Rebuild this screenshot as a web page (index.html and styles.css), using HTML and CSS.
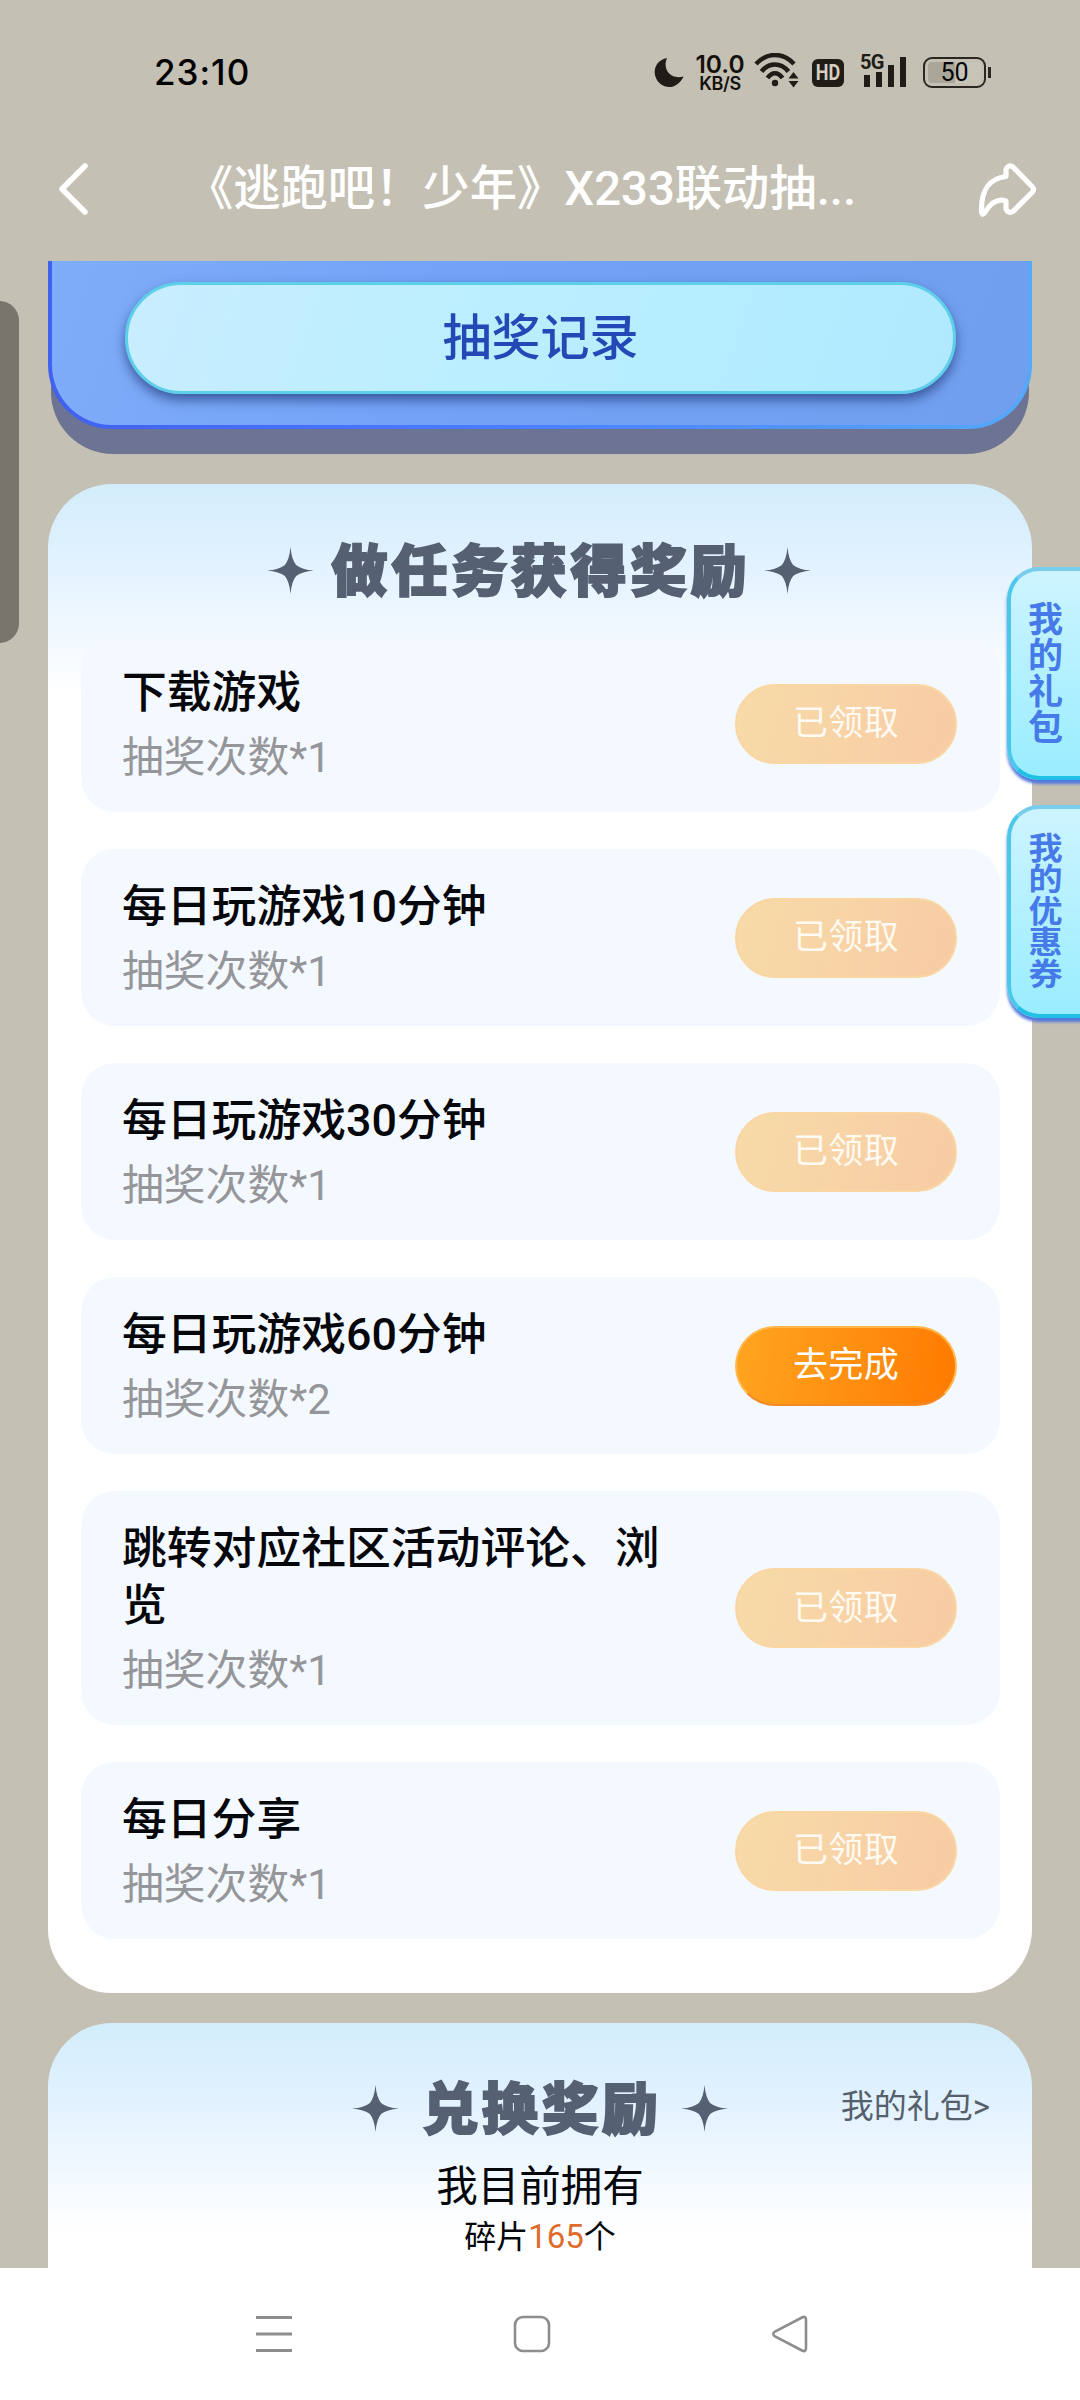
FILE: index.html
```html
<!DOCTYPE html>
<html lang="zh-CN">
<head>
<meta charset="utf-8">
<title>活动</title>
<link rel="stylesheet" href="styles.css">
</head>
<body>
<div class="screen">
  <header class="status">
    <span class="clock">23:10</span>
    <div class="status-icons">
      <svg class="moon" width="30" height="31" viewBox="0 0 30 31"><path d="M13 1C8 13 17 23 29.500 19.500C25 30 14 33 6.500 27C-3 19-1 4 13 1Z" fill="#201c17"/></svg>
      <div class="speed"><span class="speed-num">10.0</span><span class="speed-unit">KB/S</span></div>
      <svg class="wifi" width="46" height="36" viewBox="0 0 46 36"><g fill="none" stroke="#201c17" stroke-width="4.500"><path d="M2 11C13-1 29-1 40 11"/><path d="M7.500 18.500C15 9 27 9 34.500 18.500"/><path d="M13.500 25C18 18.500 24 18.500 28.500 25"/></g><circle cx="21" cy="30" r="3.200" fill="#201c17"/><path d="M39.500 19l5 6.500h-10zM39.500 34.500l5-6.500h-10z" fill="#201c17"/></svg>
      <span class="hd"><span>HD</span></span>
      <div class="signal"><span class="net">5G</span><svg width="48" height="34" viewBox="0 0 48 34"><path d="M4 20h6v12H4zM16 17h6v15h-6zM28 10h6v22h-6zM40 2h6v30h-6z" fill="#201c17"/></svg></div>
      <div class="battery"><span>50</span></div>
    </div>
  </header>
  <nav class="titlebar">
    <svg width="34" height="56" viewBox="0 0 34 56"><path d="M28 5L5 28l23 23" fill="none" stroke="#fff" stroke-width="5.500" stroke-linecap="round" stroke-linejoin="round"/></svg>
    <h1 class="title">《逃跑吧！少年》X233联动抽...</h1>
    <svg width="62" height="60" viewBox="0 0 62 60"><path d="M29 15.500V8.500Q31 3 36 6L55.500 26Q57.500 28.500 55.500 31L36 50.500Q31 53 29 48V40Q17 36 7.500 52Q4.500 55 4.500 50C4 29 13 17 29 15.500Z" fill="none" stroke="#fff" stroke-width="5.200" stroke-linejoin="round"/></svg>
  </nav>
  <main class="content">
    <section class="draw"><div class="draw-inner"><button class="record">抽奖记录</button></div></section>
    <section class="card tasks">
      <h2 class="heading"><svg class="star" viewBox="0 0 46 46"><path d="M23 0Q24 12 28.500 17.500Q34 22 46 23Q34 24 28.500 28.500Q24 34 23 46Q22 34 17.500 28.500Q12 24 0 23Q12 22 17.500 17.500Q22 12 23 0Z"/></svg><span>做任务获得奖励</span><svg class="star" viewBox="0 0 46 46"><path d="M23 0Q24 12 28.500 17.500Q34 22 46 23Q34 24 28.500 28.500Q24 34 23 46Q22 34 17.500 28.500Q12 24 0 23Q12 22 17.500 17.500Q22 12 23 0Z"/></svg></h2>
      <ul class="list">
        <li class="task"><div class="info"><p class="name">下载游戏</p><p class="sub">抽奖次数*1</p></div><button class="pill done">已领取</button></li>
        <li class="task"><div class="info"><p class="name">每日玩游戏10分钟</p><p class="sub">抽奖次数*1</p></div><button class="pill done">已领取</button></li>
        <li class="task"><div class="info"><p class="name">每日玩游戏30分钟</p><p class="sub">抽奖次数*1</p></div><button class="pill done">已领取</button></li>
        <li class="task"><div class="info"><p class="name">每日玩游戏60分钟</p><p class="sub">抽奖次数*2</p></div><button class="pill">去完成</button></li>
        <li class="task"><div class="info"><p class="name">跳转对应社区活动评论、浏览</p><p class="sub">抽奖次数*1</p></div><button class="pill done">已领取</button></li>
        <li class="task"><div class="info"><p class="name">每日分享</p><p class="sub">抽奖次数*1</p></div><button class="pill done">已领取</button></li>
      </ul>
    </section>
    <section class="card exchange">
      <h2 class="heading"><svg class="star" viewBox="0 0 46 46"><path d="M23 0Q24 12 28.500 17.500Q34 22 46 23Q34 24 28.500 28.500Q24 34 23 46Q22 34 17.500 28.500Q12 24 0 23Q12 22 17.500 17.500Q22 12 23 0Z"/></svg><span>兑换奖励</span><svg class="star" viewBox="0 0 46 46"><path d="M23 0Q24 12 28.500 17.500Q34 22 46 23Q34 24 28.500 28.500Q24 34 23 46Q22 34 17.500 28.500Q12 24 0 23Q12 22 17.500 17.500Q22 12 23 0Z"/></svg></h2>
      <a class="gift-link">我的礼包&gt;</a>
      <p class="own">我目前拥有</p>
      <p class="count">碎片<b>165</b>个</p>
    </section>
  </main>
  <footer class="navbar">
    <svg width="38" height="38" viewBox="0 0 38 38"><path d="M1 2.500h36M1 19h36M1 35.500h36" stroke="#8d8d8f" stroke-width="3"/></svg>
    <svg width="38" height="38" viewBox="0 0 38 38"><rect x="2" y="2" width="34" height="34" rx="8" fill="none" stroke="#8d8d8f" stroke-width="2.600"/></svg>
    <svg width="38" height="38" viewBox="0 0 38 38"><path d="M31 2.500Q35 .5 35 5V33Q35 37.500 31 35.500L4 21.500Q.5 19 4 16.500Z" fill="none" stroke="#8d8d8f" stroke-width="2.600"/></svg>
  </footer>
  <div class="handle"></div>
  <aside class="side">
    <a class="tab gifts"><span>我</span><span>的</span><span>礼</span><span>包</span></a>
    <a class="tab coupons"><span>我</span><span>的</span><span>优</span><span>惠</span><span>券</span></a>
  </aside>
</div>
</body>
</html>
```
FILE: styles.css
```css
* { box-sizing: border-box; }
body, h1, h2, p, ul { margin: 0; padding: 0; }
ul { list-style: none; }
button { border: 0; font-family: inherit; }
svg { display: block; flex: none; }
body { background: #c5c0b4; }

.screen {
  position: relative;
  width: 1080px;
  height: 2400px;
  overflow: hidden;
  display: flex;
  flex-direction: column;
  background: #c5c0b4;
  font-family: Roboto, "Noto Sans CJK SC", sans-serif;
  color: #05070b;
}

.status {
  height: 116px;
  padding: 52px 94px 0 154px;
  display: flex;
  justify-content: space-between;
  align-items: flex-start;
  font-family: Inter, sans-serif;
}
.clock { font-size: 35px; line-height: 41px; font-weight: 500; letter-spacing: 1px; color: #000; }
.status-icons { display: flex; align-items: flex-start; }
.moon { margin-top: 5px; }
.speed { width: 48px; margin-left: 12px; padding-top: 1px; display: flex; flex-direction: column; align-items: center; color: #14110d; }
.speed-num { font-size: 24.500px; line-height: 22px; font-weight: 600; }
.speed-unit { font-size: 18px; line-height: 18px; font-weight: 600; letter-spacing: -.4px; }
.wifi { margin: 1px 0 0 10px; }
.hd {
  width: 32px; height: 28px; margin: 7px 0 0 12px;
  border-radius: 6px;
  background: #201c17;
  color: #d4cec1;
  font: 700 18px/28px Roboto, sans-serif;
  text-align: center;
}
.hd span { display: block; transform: scaleY(1.22); }
.signal { position: relative; width: 48px; margin-left: 16px; padding-top: 3px; }
.net { position: absolute; left: 0; top: 0; font: 700 20px/20px Roboto, sans-serif; color: #201c17; letter-spacing: -.8px; }
.battery {
  position: relative;
  width: 63px; height: 31px; margin: 5px 0 0 15px;
  border: 2.5px solid #2a2620;
  border-radius: 9px;
  background: linear-gradient(90deg, #aaa69a 50%, #c8c3b7 50%) content-box;
  padding: 3px;
  text-align: center;
  font: 400 25px/21px Roboto, sans-serif;
}
.battery::after {
  content: "";
  position: absolute; right: -7px; top: 8px;
  width: 3px; height: 11px;
  background: #2a2620;
}

.titlebar {
  height: 145px;
  padding: 15px 41px 0 55px;
  display: flex;
  align-items: flex-start;
  justify-content: space-between;
}
.titlebar svg { margin-top: 30px; }
.titlebar svg:first-child { margin-left: 2px; }
.title {
  width: 760px;
  margin: 27px 26px 0 0;
  font-size: 47.300px; line-height: 62px; font-weight: 500;
  color: #fff;
  white-space: nowrap;
  text-align: center;
}

.content { height: 2007px; padding: 0 48px; overflow: hidden; }
.draw { height: 193px; padding: 0 3px; display: flex; flex-direction: column; position: relative; z-index: 0; }
.draw::before {
  content: "";
  position: absolute; left: 3px; right: 3px; top: 0; bottom: 0;
  background: #6d7393;
  border-radius: 0 0 62px 62px;
  z-index: -1;
  clip-path: inset(60px 0 0 0);
}
.draw-inner {
  height: 168px;
  margin: 0 -3px;
  padding: 21px 72px 0 73px;
  border: 4px solid transparent;
  border-top: 0;
  border-radius: 0 0 64px 64px;
  background:
    linear-gradient(110deg, #80adf8, #73a2f7 40%, #719fee) padding-box,
    linear-gradient(90deg, #4161f0, #4b80ff 50%, #56a8fa) border-box;
}
.record {
  width: 831px; height: 112px;
  border: 3px solid #5dcfe9;
  border-radius: 57px;
  background: linear-gradient(110deg, #c9edff, #baefff 45%, #b0e9ff);
  box-shadow: 0 6px 12px rgba(33, 55, 120, .7);
  color: #2349b6;
  font-size: 49px; line-height: 100px; font-weight: 500;
  padding: 1px 0 0;
}

.card {
  position: relative;
  border-radius: 64px;
  background: linear-gradient(#d3edfb, #e0f1ff 70px, #edf7ff 130px, #fdfeff 200px, #fff 210px) #fff;
}
.tasks { margin-top: 30px; height: 1509px; padding: 56px 32px 0 33px; }
.exchange { margin-top: 30px; height: 420px; padding-top: 55px; text-align: center; }
.heading {
  display: flex;
  align-items: center;
  justify-content: center;
  gap: 18px;
  height: 64px;
  font-size: 56px; line-height: 64px; font-weight: 900;
  color: #566073;
}
.heading span { letter-spacing: 3.800px; -webkit-text-stroke: 2px #566073; margin-right: -3.800px; }
.tasks .heading { padding-right: 3px; }
.exchange .heading { gap: 23px; }
.star { width: 47px; height: 47px; fill: #566073; margin-top: -4px; }

.list { margin-top: 31px; display: flex; flex-direction: column; gap: 37px; }
.task {
  min-height: 177px;
  padding: 29px 43px 26px 41px;
  display: flex;
  justify-content: space-between;
  align-items: center;
  border-radius: 34px;
  background: #f4f8ff;
}
.info { width: 545px; }
.name { font-size: 44.800px; line-height: 57px; font-weight: 500; }
.sub { margin-top: 9px; font-size: 41.800px; line-height: 56px; color: #949699; }
.pill {
  width: 222px; height: 80px;
  margin-top: -3px;
  padding: 1px 0 0;
  border: 2px solid #ffb84a;
  border-bottom-color: #f58a26;
  border-radius: 40px;
  background: linear-gradient(100deg, #ffa51f, #ff7a00);
  color: #fff;
  font-size: 35px; line-height: 74px;
  letter-spacing: .4px;
}
.done { border-color: #f9d6a2; background: linear-gradient(105deg, #f7dba8, #f8cba4); color: #fffaf2; }

.gift-link { position: absolute; right: 42px; top: 62px; font-size: 33px; line-height: 44px; color: #55606b; }
.own { margin-top: 17px; font-size: 41.500px; line-height: 56px; }
.count { margin-top: 0; font-size: 32px; line-height: 44px; }
.count b { font-weight: 400; font-size: 33px; color: #df6c2d; }

.navbar {
  height: 132px;
  padding: 0 271px 0 255px;
  display: flex;
  align-items: center;
  justify-content: space-between;
  background: #fff;
}
.handle { position: absolute; left: -20px; top: 301px; width: 39px; height: 342px; border-radius: 20px; background: #79756c; }
.side { position: absolute; right: 0; top: 567px; display: flex; flex-direction: column; gap: 25px; }
.tab {
  width: 85px; height: 213px;
  margin-right: -12px;
  padding: 3px 8px 0 0;
  display: flex;
  flex-direction: column;
  align-items: center;
  justify-content: center;
  border: 4px solid #67c8ea;
  border-color: #78cdec #78cdec #20c0e6 #4bc7e9;
  border-radius: 32px 0 0 32px;
  background: linear-gradient(#cdf4ff, #99edff);
  box-shadow: 0 4px 3px #5378dc;
  color: #467ae8;
  font-size: 35px; font-weight: 700; line-height: 36px;
}
.coupons { padding-top: 0; }
.coupons span { height: 31.500px; line-height: 31.500px; font-size: 31px; transform: scaleX(1.1); }
```
